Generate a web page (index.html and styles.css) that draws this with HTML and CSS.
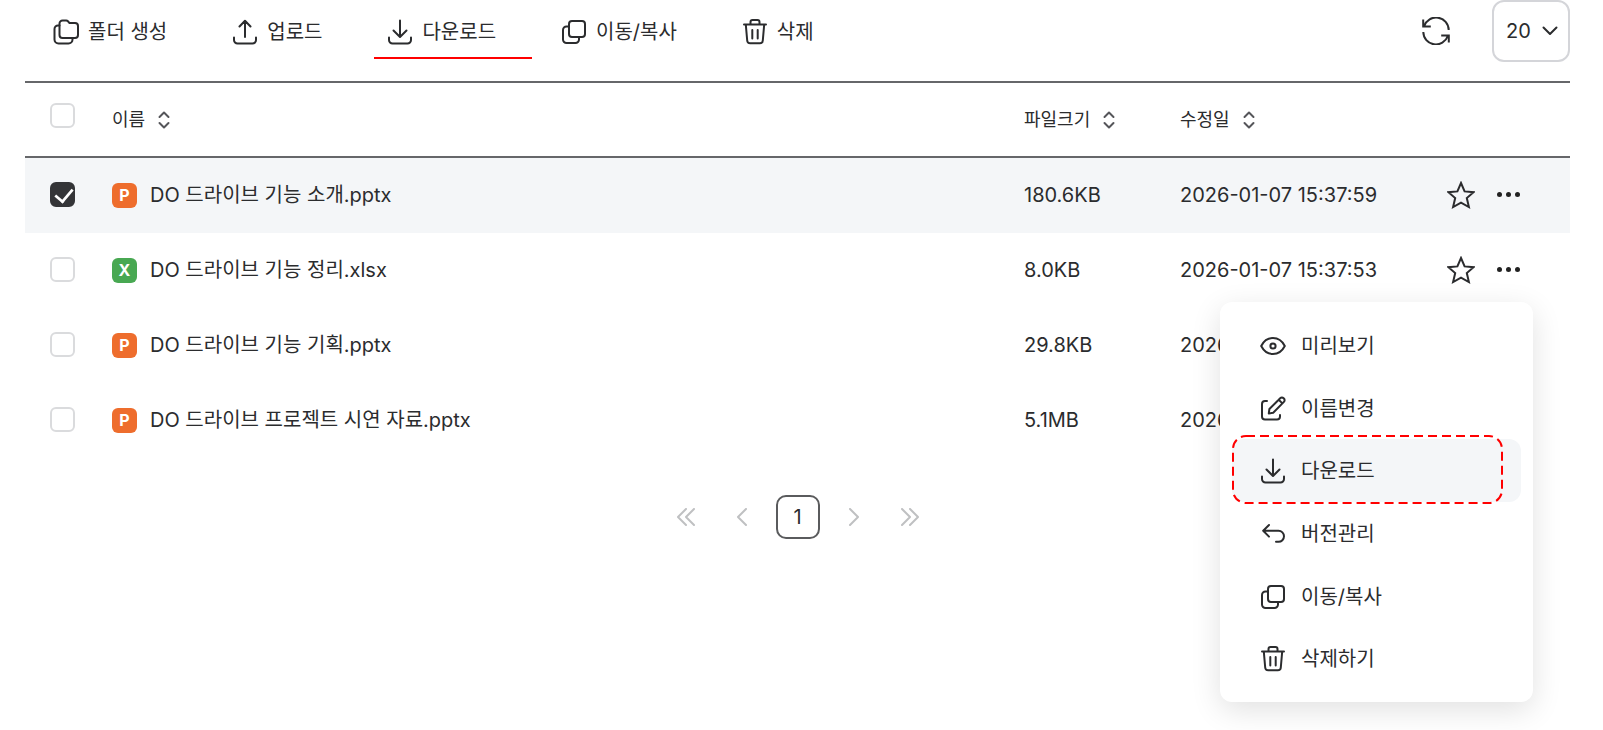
FILE: index.html
```html
<!DOCTYPE html>
<html lang="ko">
<head>
    <meta charset="UTF-8">
    <meta name="viewport" content="width=device-width, initial-scale=1.0">
    <title>DO 드라이브</title>
    <link rel="stylesheet" href="styles.css">
</head>
<body>
    <!-- shared icons -->
    <svg class="sprite" aria-hidden="true">
        <symbol id="i-folder" viewBox="0 0 26 26">
            <path d="M6.500 4.500v11.500a3 3 0 0 0 3 3h12.500a3 3 0 0 0 3-3V7a3 3 0 0 0-3-3h-5.500l-1.500-1.700a2.500 2.500 0 0 0-1.800-.8H9.500a3 3 0 0 0-3 3z"/>
            <path d="M6.500 6.500H5a3.500 3.500 0 0 0-3.500 3.500v10.500A4 4 0 0 0 5.500 24.500h10a4 4 0 0 0 4-4V19"/>
        </symbol>
        <symbol id="i-upload" viewBox="0 0 26 26">
            <path d="M13 18V2M7.500 7.500L13 1.800l5.500 5.700M2 18.500v2.500a3.500 3.500 0 0 0 3.500 3.500h15a3.500 3.500 0 0 0 3.500-3.500v-2.500"/>
        </symbol>
        <symbol id="i-download" viewBox="0 0 26 26">
            <path d="M13 1.500V17.500M6.500 11.500l6.500 6.500 6.500-6.500M2 18.500v2.500a3.500 3.500 0 0 0 3.500 3.500h15a3.500 3.500 0 0 0 3.500-3.500v-2.500"/>
        </symbol>
        <symbol id="i-copy" viewBox="0 0 26 26">
            <rect x="8" y="2" width="16" height="16" rx="3"/>
            <path d="M8 7.500H5.500A3.500 3.500 0 0 0 2 11v9.500A3.500 3.500 0 0 0 5.500 24h9a3.500 3.500 0 0 0 3.500-3.500V18"/>
        </symbol>
        <symbol id="i-trash" viewBox="0 0 26 26">
            <path d="M2 5.500h22M8.500 5.500V3a2 2 0 0 1 2-2h5a2 2 0 0 1 2 2v2.500M3.800 5.500l1.400 16a3 3 0 0 0 3 2.800h9.600a3 3 0 0 0 3-2.800l1.400-16M10.300 11v8.500M15.700 11v8.500"/>
        </symbol>
        <symbol id="i-refresh" viewBox="0 0 28 28">
            <path d="M2.200 9A12.600 12.600 0 0 1 26.700 13M1.200 2.500V9.500h7.600M25.800 19A12.600 12.600 0 0 1 1.300 15M26.800 25.500V18.500h-7.600"/>
        </symbol>
        <symbol id="i-eye" viewBox="0 0 26 26">
            <path d="M1.200 13C4 7.500 8.200 5 13 5s9 2.500 11.800 8c-2.800 5.500-7 8-11.800 8s-9-2.500-11.800-8z"/>
            <circle cx="13" cy="13" r="2.600"/>
        </symbol>
        <symbol id="i-edit" viewBox="0 0 26 26">
            <path d="M7 5H5a3 3 0 0 0-3 3v12.500a3 3 0 0 0 3 3h12a3 3 0 0 0 3-3V19"/>
            <path d="M8.800 17.500l.6-4.500L20.200 2.200a2.400 2.400 0 0 1 3.400 0l.3.300a2.400 2.400 0 0 1 0 3.400L13.200 16.700zM18.700 3.700l3.700 3.700"/>
        </symbol>
        <symbol id="i-back" viewBox="0 0 26 26">
            <path d="M9 4L3.200 9.800 9 15.600M3.500 9.800h15a5.500 5.500 0 0 1 0 11H16"/>
        </symbol>
        <symbol id="i-star" viewBox="0 0 28 28">
            <path d="M14 2l3.600 8.400 9 .8-6.800 5.900 2.100 8.900L14 21.600 6.100 26l2.100-8.900-6.800-5.900 9-.8z"/>
        </symbol>
        <symbol id="i-sort" viewBox="0 0 12 18">
            <path d="M1.500 6L6 1.500 10.500 6M1.500 12L6 16.500l4.500-4.500"/>
        </symbol>
    </svg>

    <main class="drive">
        <div class="toolbar">
            <button type="button" class="tool"><svg class="icon"><use href="#i-folder"/></svg>폴더 생성</button>
            <button type="button" class="tool"><svg class="icon"><use href="#i-upload"/></svg>업로드</button>
            <button type="button" class="tool marked"><svg class="icon"><use href="#i-download"/></svg>다운로드</button>
            <button type="button" class="tool"><svg class="icon"><use href="#i-copy"/></svg>이동/복사</button>
            <button type="button" class="tool"><svg class="icon"><use href="#i-trash"/></svg>삭제</button>
            <button type="button" class="refresh" aria-label="새로고침"><svg class="icon-lg"><use href="#i-refresh"/></svg></button>
            <div class="page-size">
                <select aria-label="페이지당 개수">
                    <option>20</option>
                    <option>40</option>
                    <option>60</option>
                </select>
                <svg class="caret" viewBox="0 0 16 10"><path d="M1.500 1.500L8 8l6.500-6.500"/></svg>
            </div>
        </div>

        <table class="files">
            <colgroup>
                <col class="col-check">
                <col>
                <col class="col-size">
                <col class="col-date">
                <col class="col-actions">
            </colgroup>
            <thead>
                <tr>
                    <th class="check"><input type="checkbox" aria-label="전체 선택"></th>
                    <th><button type="button" class="sort">이름<svg><use href="#i-sort"/></svg></button></th>
                    <th><button type="button" class="sort">파일크기<svg><use href="#i-sort"/></svg></button></th>
                    <th><button type="button" class="sort">수정일<svg><use href="#i-sort"/></svg></button></th>
                    <th></th>
                </tr>
            </thead>
            <tbody>
                <tr class="selected">
                    <td class="check"><input type="checkbox" id="file1" checked></td>
                    <td><label class="file" for="file1"><span class="badge ppt">P</span>DO 드라이브 기능 소개.pptx</label></td>
                    <td>180.6KB</td>
                    <td>2026-01-07 15:37:59</td>
                    <td>
                        <div class="actions">
                            <button type="button" aria-label="즐겨찾기"><svg class="icon-lg"><use href="#i-star"/></svg></button>
                            <button type="button" class="more" aria-label="더보기"><i></i><i></i><i></i></button>
                        </div>
                    </td>
                </tr>
                <tr>
                    <td class="check"><input type="checkbox" id="file2"></td>
                    <td><label class="file" for="file2"><span class="badge xls">X</span>DO 드라이브 기능 정리.xlsx</label></td>
                    <td>8.0KB</td>
                    <td>2026-01-07 15:37:53</td>
                    <td>
                        <div class="actions">
                            <button type="button" aria-label="즐겨찾기"><svg class="icon-lg"><use href="#i-star"/></svg></button>
                            <button type="button" class="more" aria-label="더보기"><i></i><i></i><i></i></button>
                            <div class="menu">
                                <button type="button"><svg class="icon"><use href="#i-eye"/></svg>미리보기</button>
                                <button type="button"><svg class="icon"><use href="#i-edit"/></svg>이름변경</button>
                                <button type="button" class="active">
                                    <svg class="icon"><use href="#i-download"/></svg>다운로드
                                    <svg class="outline" viewBox="0 0 271 69"><rect x="1" y="1" width="269" height="67" rx="13"/></svg>
                                </button>
                                <button type="button"><svg class="icon"><use href="#i-back"/></svg>버전관리</button>
                                <button type="button"><svg class="icon"><use href="#i-copy"/></svg>이동/복사</button>
                                <button type="button"><svg class="icon"><use href="#i-trash"/></svg>삭제하기</button>
                            </div>
                        </div>
                    </td>
                </tr>
                <tr>
                    <td class="check"><input type="checkbox" id="file3"></td>
                    <td><label class="file" for="file3"><span class="badge ppt">P</span>DO 드라이브 기능 기획.pptx</label></td>
                    <td>29.8KB</td>
                    <td>2026</td>
                    <td></td>
                </tr>
                <tr>
                    <td class="check"><input type="checkbox" id="file4"></td>
                    <td><label class="file" for="file4"><span class="badge ppt">P</span>DO 드라이브 프로젝트 시연 자료.pptx</label></td>
                    <td>5.1MB</td>
                    <td>2026</td>
                    <td></td>
                </tr>
            </tbody>
        </table>

        <nav class="pagination" aria-label="페이지">
            <button type="button" aria-label="처음"><svg viewBox="0 0 18 18"><path d="M9 1L1 9l8 8M17 1L9 9l8 8"/></svg></button>
            <button type="button" aria-label="이전"><svg viewBox="0 0 18 18"><path d="M13 1L5 9l8 8"/></svg></button>
            <button type="button" class="current">1</button>
            <button type="button" aria-label="다음"><svg viewBox="0 0 18 18"><path d="M5 1l8 8-8 8"/></svg></button>
            <button type="button" aria-label="마지막"><svg viewBox="0 0 18 18"><path d="M1 1l8 8-8 8M9 1l8 8-8 8"/></svg></button>
        </nav>
    </main>
</body>
</html>
```
FILE: styles.css
```css
* {
    box-sizing: border-box;
}
body {
    margin: 0;
    background: #fff;
    color: #2b2c2e;
    font-family: Inter, "Noto Sans CJK KR", sans-serif;
    font-size: 20px;
    line-height: 24px;
}
button, select {
    padding: 0;
    border: none;
    background: none;
    color: inherit;
    font: inherit;
    cursor: pointer;
}
svg {
    display: block;
    flex: none;
    fill: none;
    stroke: #2b2c2e;
    stroke-width: 2;
    stroke-linecap: round;
    stroke-linejoin: round;
}
.sprite {
    position: absolute;
    width: 0;
    height: 0;
}
.icon {
    width: 26px;
    height: 26px;
}
.icon-lg {
    width: 28px;
    height: 28px;
    stroke-linecap: butt;
    stroke-linejoin: miter;
}
.drive {
    min-height: 100vh;
    padding: 0 33px 0 25px;
}

/* toolbar */
.toolbar {
    display: flex;
    align-items: center;
    gap: 65px;
    height: 62px;
    margin-bottom: 19px;
    padding-left: 28px;
}
.tool {
    position: relative;
    display: flex;
    align-items: center;
    gap: 9px;
    padding-top: 2px;
    white-space: nowrap;
}
.marked::after {
    content: "";
    position: absolute;
    left: -13px;
    right: -36px;
    bottom: -14px;
    height: 2px;
    background: #f00;
}
.refresh {
    margin-left: auto;
}
.page-size {
    position: relative;
    margin-left: -23px;
}
.page-size select {
    display: block;
    width: 78px;
    height: 62px;
    padding-left: 12px;
    border: 2px solid #d4d5d9;
    border-radius: 12px;
    appearance: none;
}
.caret {
    position: absolute;
    right: 12px;
    top: 26px;
    width: 16px;
    height: 10px;
    pointer-events: none;
}

/* file list */
.files {
    width: 100%;
    table-layout: fixed;
    border-collapse: separate;
    border-spacing: 0;
    border-top: 2px solid #66676a;
}
.col-check {
    width: 87px;
}
.col-size {
    width: 156px;
}
.col-date {
    width: 252px;
}
.col-actions {
    width: 138px;
}
th, td {
    height: 75px;
    padding: 0;
    text-align: left;
    white-space: nowrap;
}
td {
    padding-bottom: 2px;
}
th {
    border-bottom: 2px solid #66676a;
    font-size: 18px;
    font-weight: 400;
}
.check {
    padding-left: 25px;
}
th.check {
    padding-bottom: 8px;
}
.selected td {
    background: #f4f6f8;
}
input[type="checkbox"] {
    appearance: none;
    display: block;
    width: 25px;
    height: 25px;
    margin: 0;
    border: 2px solid #dadbdd;
    border-radius: 6px;
    background: #fff;
}
input[type="checkbox"]:checked {
    border-color: #343538;
    background: #343538;
}
input[type="checkbox"]:checked::before {
    content: "";
    display: block;
    width: 9px;
    height: 16px;
    margin: 0 0 0 6px;
    border: solid #fff;
    border-width: 0 3px 3px 0;
    transform: rotate(40deg) scale(0.9);
}
.sort {
    display: flex;
    align-items: center;
    gap: 13px;
}
.sort svg {
    width: 12px;
    height: 18px;
    stroke: #55565a;
}
.file {
    display: flex;
    align-items: center;
    gap: 13px;
}
.badge {
    width: 25px;
    height: 25px;
    margin-top: 2px;
    border-radius: 6px;
    color: #fff;
    font-size: 16px;
    font-weight: 700;
    line-height: 25px;
    text-align: center;
}
.ppt {
    background: #ee6d2d;
}
.xls {
    background: #48a852;
}
.actions {
    position: relative;
    display: flex;
    align-items: center;
    gap: 20px;
    padding-left: 15px;
}
.more {
    display: flex;
    justify-content: center;
    gap: 4px;
    width: 26px;
    padding: 8px 0;
}
.more i {
    width: 5px;
    height: 5px;
    border-radius: 50%;
    background: #222;
}

/* context menu */
.menu {
    position: absolute;
    top: 46px;
    right: 37px;
    z-index: 1;
    display: flex;
    flex-direction: column;
    width: 313px;
    height: 400px;
    padding: 12px;
    border-radius: 12px;
    background: #fff;
    box-shadow: 0 8px 30px rgba(0, 0, 0, 0.12);
}
.menu button {
    position: relative;
    display: flex;
    flex: 1;
    align-items: center;
    gap: 15px;
    padding: 2px 0 0 28px;
    border-radius: 12px;
}
.menu .active {
    background: #f4f6f8;
}
.outline {
    position: absolute;
    left: 0;
    top: -4px;
    width: 271px;
    height: 69px;
    stroke: #f00;
    stroke-dasharray: 9 5;
    stroke-linecap: butt;
}

/* pagination */
.pagination {
    display: flex;
    justify-content: center;
    gap: 12px;
    margin-top: 37px;
}
.pagination button {
    display: flex;
    align-items: center;
    justify-content: center;
    width: 44px;
    height: 44px;
}
.pagination svg {
    width: 18px;
    height: 18px;
    stroke: #bfc0c2;
}
.pagination .current {
    border: 2px solid #5a5b5d;
    border-radius: 10px;
}
```
